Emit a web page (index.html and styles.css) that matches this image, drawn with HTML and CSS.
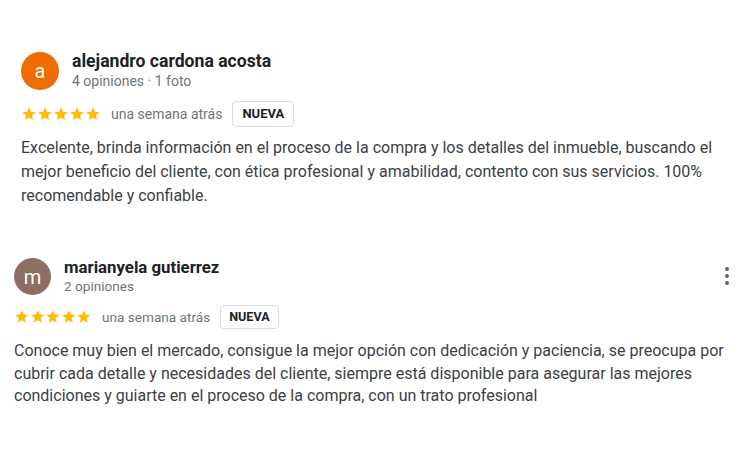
FILE: index.html
```html
<!DOCTYPE html>
<html lang="es">
<head>
    <meta charset="utf-8">
    <title>Opiniones</title>
    <link rel="stylesheet" href="styles.css">
</head>
<body>
    <div class="reviews">
        <!-- Opinión 1 -->
        <div class="review">
            <div class="review-head">
                <div class="avatar avatar-orange">a</div>
                <div class="author">
                    <div class="author-name">alejandro cardona acosta</div>
                    <div class="author-meta">4 opiniones · 1 foto</div>
                </div>
            </div>
            <div class="review-rating">
                <span class="stars">
                    <svg viewBox="0 0 24 24"><path d="M12 17.27L18.18 21l-1.64-7.03L22 9.24l-7.19-.61L12 2 9.19 8.63 2 9.24l5.46 4.73L5.82 21z"/></svg>
                    <svg viewBox="0 0 24 24"><path d="M12 17.27L18.18 21l-1.64-7.03L22 9.24l-7.19-.61L12 2 9.19 8.63 2 9.24l5.46 4.73L5.82 21z"/></svg>
                    <svg viewBox="0 0 24 24"><path d="M12 17.27L18.18 21l-1.64-7.03L22 9.24l-7.19-.61L12 2 9.19 8.63 2 9.24l5.46 4.73L5.82 21z"/></svg>
                    <svg viewBox="0 0 24 24"><path d="M12 17.27L18.18 21l-1.64-7.03L22 9.24l-7.19-.61L12 2 9.19 8.63 2 9.24l5.46 4.73L5.82 21z"/></svg>
                    <svg viewBox="0 0 24 24"><path d="M12 17.27L18.18 21l-1.64-7.03L22 9.24l-7.19-.61L12 2 9.19 8.63 2 9.24l5.46 4.73L5.82 21z"/></svg>
                </span>
                <span class="review-date">una semana atrás</span>
                <span class="badge">NUEVA</span>
            </div>
            <p class="review-text">Excelente, brinda información en el proceso de la compra y los detalles del inmueble, buscando el mejor beneficio del cliente, con ética profesional y amabilidad, contento con sus servicios. 100% recomendable y confiable.</p>
        </div>

        <!-- Opinión 2 -->
        <div class="review review-small">
            <div class="review-head">
                <div class="avatar avatar-brown">m</div>
                <div class="author">
                    <div class="author-name">marianyela gutierrez</div>
                    <div class="author-meta">2 opiniones</div>
                </div>
                <button class="more" aria-label="Más opciones">
                    <svg viewBox="0 0 24 24"><circle cx="12" cy="5" r="2"/><circle cx="12" cy="12" r="2"/><circle cx="12" cy="19" r="2"/></svg>
                </button>
            </div>
            <div class="review-rating">
                <span class="stars">
                    <svg viewBox="0 0 24 24"><path d="M12 17.27L18.18 21l-1.64-7.03L22 9.24l-7.19-.61L12 2 9.19 8.63 2 9.24l5.46 4.73L5.82 21z"/></svg>
                    <svg viewBox="0 0 24 24"><path d="M12 17.27L18.18 21l-1.64-7.03L22 9.24l-7.19-.61L12 2 9.19 8.63 2 9.24l5.46 4.73L5.82 21z"/></svg>
                    <svg viewBox="0 0 24 24"><path d="M12 17.27L18.18 21l-1.64-7.03L22 9.24l-7.19-.61L12 2 9.19 8.63 2 9.24l5.46 4.73L5.82 21z"/></svg>
                    <svg viewBox="0 0 24 24"><path d="M12 17.27L18.18 21l-1.64-7.03L22 9.24l-7.19-.61L12 2 9.19 8.63 2 9.24l5.46 4.73L5.82 21z"/></svg>
                    <svg viewBox="0 0 24 24"><path d="M12 17.27L18.18 21l-1.64-7.03L22 9.24l-7.19-.61L12 2 9.19 8.63 2 9.24l5.46 4.73L5.82 21z"/></svg>
                </span>
                <span class="review-date">una semana atrás</span>
                <span class="badge">NUEVA</span>
            </div>
            <p class="review-text">Conoce muy bien el mercado, consigue la mejor opción con dedicación y paciencia, se preocupa por cubrir cada detalle y necesidades del cliente, siempre está disponible para asegurar las mejores condiciones y guiarte en el proceso de la compra, con un trato profesional</p>
        </div>
    </div>
</body>
</html>
```

FILE: styles.css
```css
/* Estilos generales */
body {
    margin: 0;
    background: #fff;
    font-family: Roboto, Arial, sans-serif;
    color: #202124;
}

.reviews {
    padding-top: 51px;
}

.review {
    padding: 0 0 0 21px;
}

/* Cabecera con avatar y autor */
.review-head {
    display: flex;
    align-items: center;
}

.avatar {
    width: 38px;
    height: 38px;
    border-radius: 50%;
    color: #fff;
    font-size: 20px;
    display: flex;
    align-items: center;
    justify-content: center;
    flex-shrink: 0;
}

.avatar-orange {
    background-color: #ef6c00;
}

.avatar-brown {
    background-color: #8d6e63;
}

.author {
    margin-left: 13px;
}

.author-name {
    font-size: 17.6px;
    font-weight: 700;
    line-height: 21px;
}

.author-meta {
    font-size: 14px;
    color: #70757a;
    line-height: 18px;
}

/* Estrellas, fecha y etiqueta */
.review-rating {
    display: flex;
    align-items: center;
    margin-top: 11px;
}

.stars {
    display: flex;
}

.stars svg {
    width: 16px;
    height: 16px;
    fill: #fbbc04;
}

.review-date {
    margin-left: 10px;
    font-size: 14px;
    color: #70757a;
}

.badge {
    margin-left: 10px;
    padding: 0 9px;
    height: 24px;
    line-height: 24px;
    border: 1px solid #dadce0;
    border-radius: 4px;
    font-size: 13px;
    font-weight: 700;
    color: #202124;
}

.review-text {
    margin: 9px 0 0;
    font-size: 16px;
    line-height: 24px;
    color: #3c4043;
}

/* Segunda opinión, un poco más pequeña */
.review-small {
    margin-top: 50px;
    padding-left: 14px;
    padding-right: 7px;
}

.review-small .avatar {
    width: 37px;
    height: 37px;
}

.review-small .author {
    margin-left: 13px;
}

.review-small .author-name {
    font-size: 16.8px;
    line-height: 19px;
}

.review-small .author-meta {
    font-size: 13.6px;
    line-height: 18px;
}

.review-small .review-rating {
    margin-top: 10px;
}

.review-small .stars svg {
    width: 15.6px;
    height: 15.6px;
}

.review-small .review-date {
    font-size: 13.6px;
}

.review-small .badge {
    height: 22px;
    line-height: 22px;
    padding: 0 8px;
    font-size: 12.6px;
}

.review-small .review-text {
    margin-top: 11px;
    line-height: 22.5px;
}

.more {
    margin-left: auto;
    align-self: flex-start;
    margin-top: 6px;
    background: none;
    border: none;
    padding: 0;
    width: 24px;
    height: 24px;
    cursor: pointer;
}

.more svg {
    width: 24px;
    height: 24px;
    fill: #5f6368;
}
```
